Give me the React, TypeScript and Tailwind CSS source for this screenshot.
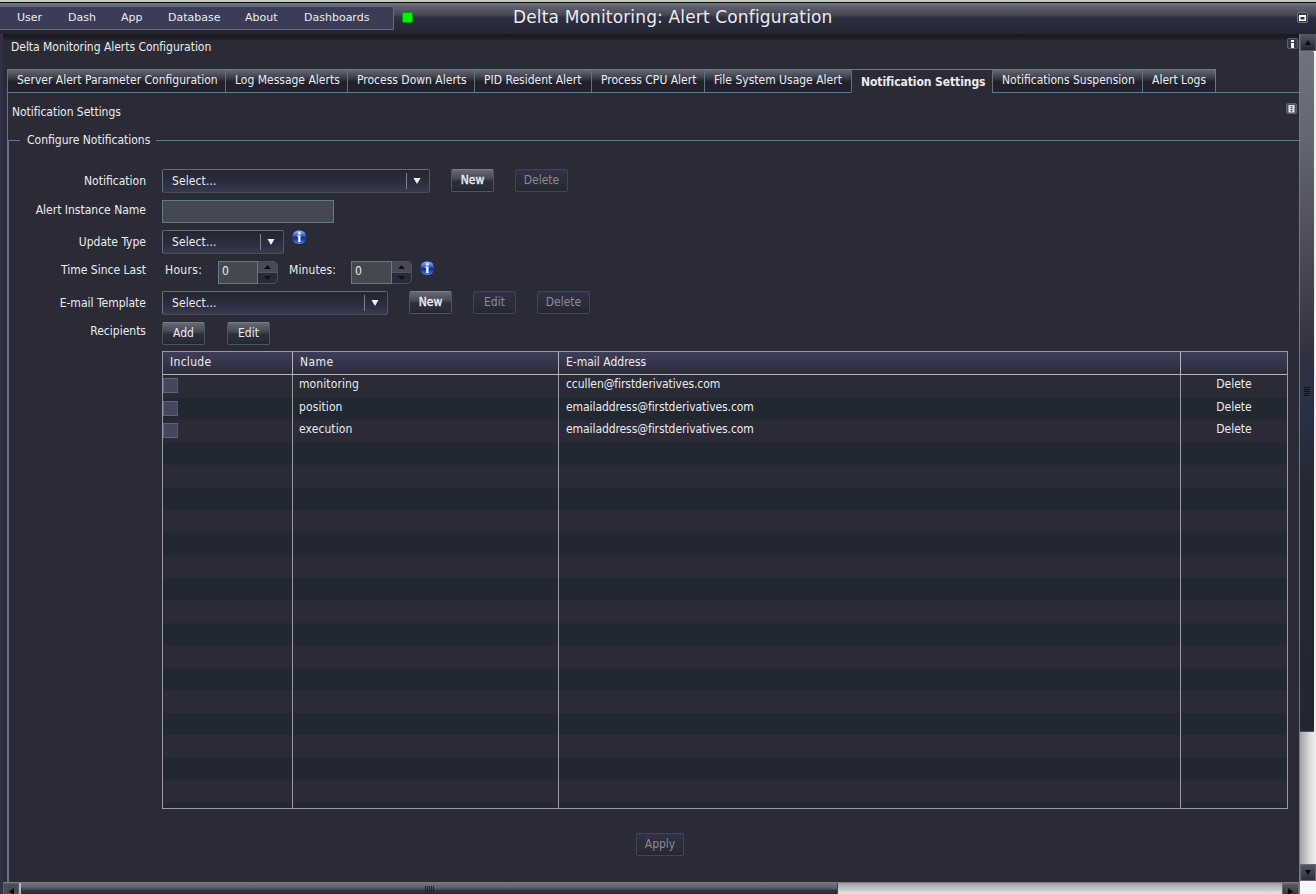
import type { ReactNode } from "react";

type Tab = {
  label: string;
  width: string;
};

type Recipient = {
  name: string;
  email: string;
};

const MENU = [
  { label: "User", width: "w-[51px]" },
  { label: "Dash", width: "w-[53px]" },
  { label: "App", width: "w-[47px]" },
  { label: "Database", width: "w-[77px]" },
  { label: "About", width: "w-[59px]" },
  { label: "Dashboards", width: "w-[80px]" }
];

const TABS: Tab[] = [
  { label: "Server Alert Parameter Configuration", width: "w-[218px]" },
  { label: "Log Message Alerts", width: "w-[122px]" },
  { label: "Process Down Alerts", width: "w-[127px]" },
  { label: "PID Resident Alert", width: "w-[117px]" },
  { label: "Process CPU Alert", width: "w-[113px]" },
  { label: "File System Usage Alert", width: "w-[147px]" },
  { label: "Notification Settings", width: "w-[141px]" },
  { label: "Notifications Suspension", width: "w-[150px]" },
  { label: "Alert Logs", width: "w-[73px]" }
];

const ACTIVE_TAB = "Notification Settings";

const RECIPIENTS: Recipient[] = [
  { name: "monitoring", email: "ccullen@firstderivatives.com" },
  { name: "position", email: "emailaddress@firstderivatives.com" },
  { name: "execution", email: "emailaddress@firstderivatives.com" }
];

const ROW_COUNT = 21;

export default function App() {
  return (
    <div className="flex h-[894px] w-[1316px] flex-col overflow-hidden bg-[#2a2b37] font-['DejaVu_Sans_Condensed','DejaVu_Sans',sans-serif] text-[12px] leading-[14px] whitespace-nowrap text-[#ececf0] [font-stretch:condensed]">
      <TitleBar />
      <div className="flex min-h-0 flex-1">
        <div className="w-[3px] shrink-0 bg-[#303144]" />
        <div className="flex w-[1296px] shrink-0 flex-col">
          <main className="flex h-[848px] flex-col bg-[linear-gradient(#181920_0px,#1c1d25_4px,#2a2b37_7px)]">
            <div className="flex h-[35px] items-start justify-between pt-[6px] pr-px pl-[8px]">
              <h2 className="tracking-[-0.03px]">Delta Monitoring Alerts Configuration</h2>
              <span className="-mt-[2px]">
                <InfoBadge />
              </span>
            </div>
            <Tabs />
            <NotificationPanel />
          </main>
          <HorizontalScrollbar />
        </div>
        <VerticalScrollbar />
      </div>
    </div>
  );
}

function TitleBar() {
  return (
    <header className="flex h-[34px] shrink-0 flex-col">
      <div className="h-[2px] bg-[#c3cbbc]" />
      <div className="h-px bg-[#08080c]" />
      <div className="flex h-[31px] bg-[linear-gradient(#777885_0px,#62636f_3px,#454653_12px,#303143_14px,#282c3b_19px,#252632_30px)] pt-[3px]">
        <nav className="flex h-[24px] w-[394px] items-center border border-l-0 border-[#5d6f7c] bg-[#3b3c55] pl-[17px] font-['DejaVu_Sans'] text-[11px] [font-stretch:normal]">
          {MENU.map((item) => (
            <span key={item.label} className={`${item.width} -mt-px shrink-0`}>
              {item.label}
            </span>
          ))}
        </nav>
        <div className="mt-[6px] ml-[8px] h-[11px] w-[11px] rounded-[2px] border border-[#049a10] bg-[#00f500]" />
        <h1 className="-mt-px ml-[100px] w-[320px] font-['DejaVu_Sans'] text-[17px] leading-[24px] tracking-[0.15px] [font-stretch:normal]">
          Delta Monitoring: Alert Configuration
        </h1>
        <svg className="mt-[6px] mr-[8px] ml-auto h-[11px] w-[11px]" viewBox="0 0 11 11">
          <rect x="0.5" y="0.5" width="10" height="10" rx="1.5" fill="#373a49" stroke="#6c7480" />
          <path d="M2 3h7v6H2z" fill="#fff" />
          <path d="M3.500 5h4v2.500h-4z" fill="#303241" />
        </svg>
      </div>
    </header>
  );
}

function InfoBadge() {
  return (
    <svg className="h-[11px] w-[11px]" viewBox="0 0 11 11">
      <rect x="0.5" y="0.5" width="10" height="10" rx="1.5" fill="#3a3d49" stroke="#59636f" />
      <path d="M4 2h3v2H4zM4 5h3v5H4z" fill="#fff" />
    </svg>
  );
}

function Tabs() {
  return (
    <div className="flex h-[24px] shrink-0 pl-[4px]">
      {TABS.map((tab) => (
        <TabItem key={tab.label} tab={tab} active={tab.label === ACTIVE_TAB} />
      ))}
      <div className="flex-1 border-b border-l border-[#64798a]" />
    </div>
  );
}

function TabItem({ tab, active }: { tab: Tab; active: boolean }) {
  const style = active
    ? "border-b-transparent font-bold pt-[5px] tracking-[-0.08px]"
    : "border-b-[#64798a] bg-[linear-gradient(#626674_0px,#4b4d59_5px,#343541_9px,#1f202a_12px,#22232e_22px)] pt-[3px]";

  return (
    <div
      className={`${tab.width} ${style} shrink-0 border-t border-b border-l border-t-[#6b7d89] border-l-[#5f7482] pl-[9px]`}
    >
      {tab.label}
    </div>
  );
}

function NotificationPanel() {
  return (
    <section className="ml-[4px] flex flex-1 flex-col border-l border-[#61788a]">
      <div className="flex h-[39px] justify-between pt-[12px] pr-[2px] pl-[4px]">
        <h3 className="tracking-[-0.04px]">Notification Settings</h3>
        <svg className="-mt-[2px] h-[11px] w-[11px]" viewBox="0 0 11 11">
          <rect x="0.5" y="0.5" width="10" height="10" rx="1.5" fill="#4c505c" stroke="#59636f" />
          <path d="M2.500 2h6v7.500h-6z" fill="#e9eaee" />
          <path d="M4.500 3h2v1.200h-2zM4.500 5h2v1.200h-2zM4.500 7h2v1.500h-2z" fill="#444853" />
        </svg>
      </div>
      <div className="flex h-[16px] items-center">
        <div className="h-px w-[12px] bg-[#64798a]" />
        <span className="w-[136px] pl-[7px]">Configure Notifications</span>
        <div className="h-px flex-1 bg-[#64798a]" />
      </div>
      <div className="-mt-[8px] flex flex-1 flex-col border-l border-[#62788a] pt-[29px]">
        <FormRow label="Notification" height="h-[31px]" labelPad="pt-[5px]">
          <Select width="w-[268px]" />
          <Button label="New" width="w-[43px]" margin="ml-[21px]" strong />
          <Button label="Delete" width="w-[53px]" margin="ml-[21px]" disabled />
        </FormRow>
        <FormRow label="Alert Instance Name" height="h-[30px]" labelPad="pt-[3px]">
          <div className="h-[23px] w-[172px] border border-[#64798a] bg-[#444951]" />
        </FormRow>
        <FormRow label="Update Type" height="h-[31px]" labelPad="pt-[5px]">
          <Select width="w-[122px]" />
          <InfoBall />
        </FormRow>
        <FormRow label="Time Since Last" height="h-[30px]" labelPad="pt-[2px]">
          <span className="w-[56px] pt-[2px] pl-[3px] tracking-[0.3px]">Hours:</span>
          <Stepper width="w-[40px]" />
          <span className="w-[73px] pt-[2px] pl-[11px] tracking-[0.1px]">Minutes:</span>
          <Stepper width="w-[41px]" />
          <InfoBall />
        </FormRow>
        <FormRow label="E-mail Template" height="h-[31px]" labelPad="pt-[5px]">
          <Select width="w-[226px]" />
          <Button label="New" width="w-[43px]" margin="ml-[21px]" strong />
          <Button label="Edit" width="w-[43px]" margin="ml-[21px]" disabled />
          <Button label="Delete" width="w-[53px]" margin="ml-[21px]" disabled />
        </FormRow>
        <FormRow label="Recipients" height="h-[29px]" labelPad="pt-[2px]">
          <Button label="Add" width="w-[43px]" margin="ml-0" />
          <Button label="Edit" width="w-[43px]" margin="ml-[22px]" />
        </FormRow>
        <RecipientTable />
        <div className="mt-[24px] ml-[627px]">
          <Button label="Apply" width="w-[48px]" margin="ml-0" disabled />
        </div>
      </div>
    </section>
  );
}

function FormRow({
  label,
  height,
  labelPad,
  children
}: {
  label: string;
  height: string;
  labelPad: string;
  children: ReactNode;
}) {
  return (
    <div className={`${height} flex shrink-0 items-start`}>
      <label className={`${labelPad} mr-[16px] w-[137px] text-right`}>{label}</label>
      {children}
    </div>
  );
}

function Select({ width }: { width: string }) {
  return (
    <div
      className={`${width} flex h-[24px] items-center rounded-[2px] border border-t-[#5c7078] border-r-[#4f5a68] border-b-[#4a4b5b] border-l-[#64737f] bg-[linear-gradient(#23262f,#2a2c3a_45%,#2c3044_65%,#3a3948)] pr-[8px] pl-[9px]`}
    >
      <span className="flex-1 tracking-[0.1px]">Select...</span>
      <span className="mr-[6px] h-[16px] w-px bg-[#73868f]" />
      <svg className="h-[6px] w-[8px]" viewBox="0 0 8 6">
        <path d="M0.500 0h7L4 6z" fill="#f2f2f4" />
      </svg>
    </div>
  );
}

function Button({
  label,
  width,
  margin,
  disabled,
  strong
}: {
  label: string;
  width: string;
  margin: string;
  disabled?: boolean;
  strong?: boolean;
}) {
  const style = disabled
    ? "border-[#414451] bg-[linear-gradient(#30334a,#2b2c38_50%,#292e3d_60%,#252731)] text-[#898a94]"
    : "border-[#4c5663] border-t-[#7a7c88] bg-[linear-gradient(#686976,#484956_40%,#2c2d3c_55%,#2b2d3b_80%,#24252e)]";

  return (
    <button
      type="button"
      className={`${width} ${margin} ${style} flex h-[23px] shrink-0 justify-center rounded-[2px] border pt-[3px] ${strong ? "[-webkit-text-stroke:0.4px]" : ""}`}
    >
      {label}
    </button>
  );
}

function Stepper({ width }: { width: string }) {
  return (
    <div className="flex h-[23px]">
      <div className={`${width} border border-[#64798a] bg-[#444951] pt-[2px] pl-[3px]`}>0</div>
      <div className="flex w-[20px] flex-col rounded-r-[5px] border border-l-0 border-[#4a5360] bg-[#292b38]">
        <div className="flex h-[11px] items-center justify-center rounded-tr-[4px] border-b border-[#545664] bg-[#494a57]">
          <svg className="h-[4px] w-[7px]" viewBox="0 0 7 4">
            <path d="M0 4h7L3.500 0z" fill="#101116" />
          </svg>
        </div>
        <div className="flex flex-1 items-center justify-center">
          <svg className="h-[4px] w-[7px]" viewBox="0 0 7 4">
            <path d="M0 0h7L3.500 4z" fill="#101116" />
          </svg>
        </div>
      </div>
    </div>
  );
}

function InfoBall() {
  return (
    <svg className="ml-[8px] h-[15px] w-[15px]" viewBox="0 0 15 15">
      <defs>
        <linearGradient id="ball" x1="0" y1="0" x2="0" y2="1">
          <stop offset="0" stopColor="#a3bdf5" />
          <stop offset="0.35" stopColor="#3c68d4" />
          <stop offset="0.55" stopColor="#0c2ba0" />
          <stop offset="1" stopColor="#4d82ee" />
        </linearGradient>
      </defs>
      <rect x="0.5" y="0.5" width="13.5" height="13.500" rx="6" fill="url(#ball)" />
      <path d="M6.200 2.200h2.300v2.200H6.200zM5.200 5.400h3.300v6.600H6.200V6.600h-1z" fill="#fff" />
    </svg>
  );
}

function RecipientTable() {
  return (
    <div className="ml-[153px] h-[458px] w-[1126px] shrink-0 overflow-hidden border border-[#999ba1]">
      <div className="flex h-[23px] border-b border-[#b4b5bb] bg-[linear-gradient(#3d3e57,#35364b_50%,#2b2c39)]">
        <HeaderCell width="w-[130px]" label="Include" spacing="tracking-[0.3px]" />
        <HeaderCell width="w-[266px]" label="Name" spacing="tracking-[0.4px]" />
        <HeaderCell width="w-[622px]" label="E-mail Address" spacing="tracking-normal" />
        <div className="flex-1" />
      </div>
      {Array.from({ length: ROW_COUNT }, (_, index) => (
        <TableRow key={index} recipient={RECIPIENTS[index]} odd={index % 2 === 1} />
      ))}
    </div>
  );
}

function HeaderCell({ width, label, spacing }: { width: string; label: string; spacing: string }) {
  return (
    <div className={`${width} ${spacing} border-r border-[#b4b5bb] pt-[3px] pl-[7px]`}>{label}</div>
  );
}

function TableRow({ recipient, odd }: { recipient?: Recipient; odd: boolean }) {
  return (
    <div className={`flex h-[22.5px] ${odd ? "bg-[#222832]" : "bg-[#2a2b37]"}`}>
      <div className="w-[130px] border-r border-[#999ba1] pt-[3px]">
        {recipient ? (
          <div className="h-[15px] w-[15px] border border-[#5c6878] border-r-[#50576a] bg-[#454660]" />
        ) : null}
      </div>
      <div className="w-[266px] border-r border-[#999ba1] pt-[2px] pl-[6px] tracking-[0.1px]">
        {recipient?.name}
      </div>
      <div className="w-[622px] border-r border-[#999ba1] pt-[2px] pl-[7px] tracking-[-0.08px]">
        {recipient?.email}
      </div>
      <div className="flex-1 pt-[2px] text-center">{recipient ? "Delete" : null}</div>
    </div>
  );
}

function VerticalScrollbar() {
  return (
    <div className="flex w-[17px] shrink-0 flex-col border-l border-[#777982]">
      <div className="flex h-[17px] items-center justify-center border border-[#555762] bg-[linear-gradient(#555663,#252632)]">
        <svg className="h-[5px] w-[6px]" viewBox="0 0 6 5">
          <path d="M0 5h6L3 0z" fill="#08090c" />
        </svg>
      </div>
      <div className="flex h-[813px] bg-[linear-gradient(90deg,#a0a1a5,#dadada_60%,#f0f0f0)]">
        <div className="flex h-[681px] w-[14px] items-center justify-center rounded-t-[2px] border-b border-[#4b4c55] bg-[linear-gradient(#717280,#666774_12%,#3b3b4a_39%,#303042_45%,#293044_54%,#242832_65%,#222731)]">
          <div className="flex flex-col gap-px">
            <i className="h-px w-[6px] bg-[#101218]" />
            <i className="h-px w-[6px] bg-[#101218]" />
            <i className="h-px w-[6px] bg-[#101218]" />
            <i className="h-px w-[6px] bg-[#101218]" />
            <i className="h-px w-[6px] bg-[#101218]" />
          </div>
        </div>
      </div>
      <div className="flex h-[17px] items-center justify-center border border-[#6a6b77] bg-[linear-gradient(#555663,#30313f)]">
        <svg className="h-[5px] w-[6px]" viewBox="0 0 6 5">
          <path d="M0 0h6L3 5z" fill="#08090c" />
        </svg>
      </div>
      <div className="flex-1 bg-[#f5f5f7]" />
    </div>
  );
}

function HorizontalScrollbar() {
  return (
    <div className="flex h-[12px] overflow-hidden border-t border-[#797b82]">
      <div className="flex w-[16px] items-center justify-center border border-b-0 border-[#5c5e69] bg-[#4a4b59] pt-[4px]">
        <svg className="h-[7px] w-[5px]" viewBox="0 0 5 7">
          <path d="M5 0v7L0 3.500z" fill="#08090c" />
        </svg>
      </div>
      <div className="w-[2px] bg-[#b5b6ba]" />
      <div className="flex w-[817px] items-center justify-center border-r border-[#42434f] bg-[linear-gradient(#74757f_0px,#5c5d69_5px,#363747_7px,#25263a_11px)]">
        <div className="flex gap-px">
          <i className="h-[6px] w-px bg-[#20212b]" />
          <i className="h-[6px] w-px bg-[#20212b]" />
          <i className="h-[6px] w-px bg-[#20212b]" />
          <i className="h-[6px] w-px bg-[#20212b]" />
          <i className="h-[6px] w-px bg-[#20212b]" />
        </div>
      </div>
      <div className="flex-1 bg-[linear-gradient(#9d9ea1,#e6e6e6)]" />
      <div className="flex w-[17px] items-center justify-center border border-b-0 border-[#6a6b77] bg-[linear-gradient(#5a5b67,#343542)] pt-[4px]">
        <svg className="h-[7px] w-[5px]" viewBox="0 0 5 7">
          <path d="M0 0v7L5 3.500z" fill="#08090c" />
        </svg>
      </div>
    </div>
  );
}
